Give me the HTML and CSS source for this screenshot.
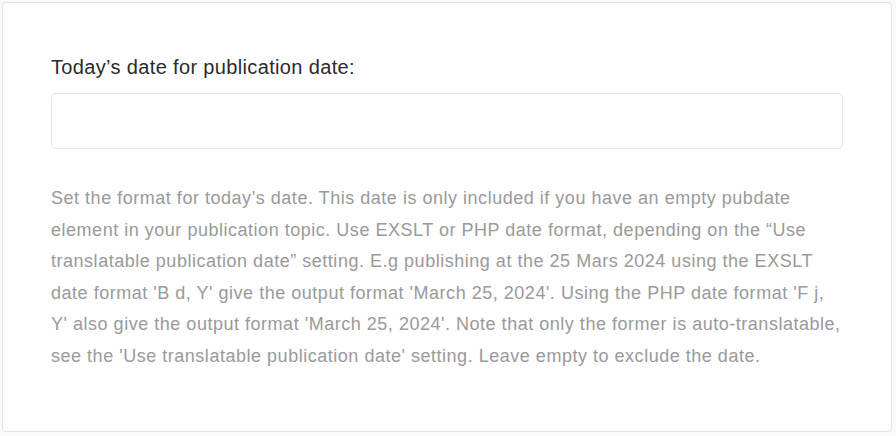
FILE: index.html
```html
<!DOCTYPE html>
<html lang="en">
<head>
<meta charset="utf-8">
<title>Publication date setting</title>
<link rel="stylesheet" href="styles.css">
</head>
<body>
<div class="card">
  <div class="field">
    <label class="label" for="pubdate">Today’s date for publication date:</label>
    <input class="input" id="pubdate" type="text">
    <p class="help">Set the format for today’s date. This date is only included if you have an empty pubdate element in your publication topic. Use EXSLT or PHP date format, depending on the “Use translatable publication date” setting. E.g publishing at the 25 Mars 2024 using the EXSLT date format 'B d, Y' give the output format 'March 25, 2024'. Using the PHP date format 'F j, Y' also give the output format 'March 25, 2024'. Note that only the former is auto-translatable, see the 'Use translatable publication date' setting. Leave empty to exclude the date.</p>
  </div>
</div>
</body>
</html>
```

FILE: styles.css
```css
html, body {
  margin: 0;
  padding: 0;
  background: #fafafa;
}
body {
  padding: 2px 4px 2px 2px;
  font-family: "Liberation Sans", Arial, sans-serif;
}
.card {
  background: #fefefe;
  border: 1px solid #e4e4e4;
  border-radius: 4px;
  height: 430px;
  box-sizing: border-box;
  padding: 52px 48px 0 48px;
}
.field {
  display: flex;
  flex-direction: column;
}
.label {
  font-size: 20px;
  letter-spacing: 0.35px;
  color: #2b2b2b;
  line-height: 24px;
  margin-bottom: 14px;
}
.input {
  height: 56px;
  box-sizing: border-box;
  border: 1px solid #e6e6e6;
  border-radius: 5px;
  background: #fefefe;
  margin: 0;
  padding: 0 12px;
  font: inherit;
}
.help {
  margin: 34px 0 0 0;
  font-size: 18px;
  letter-spacing: 0.52px;
  line-height: 31.6px;
  color: #9a9a9a;
}
```
